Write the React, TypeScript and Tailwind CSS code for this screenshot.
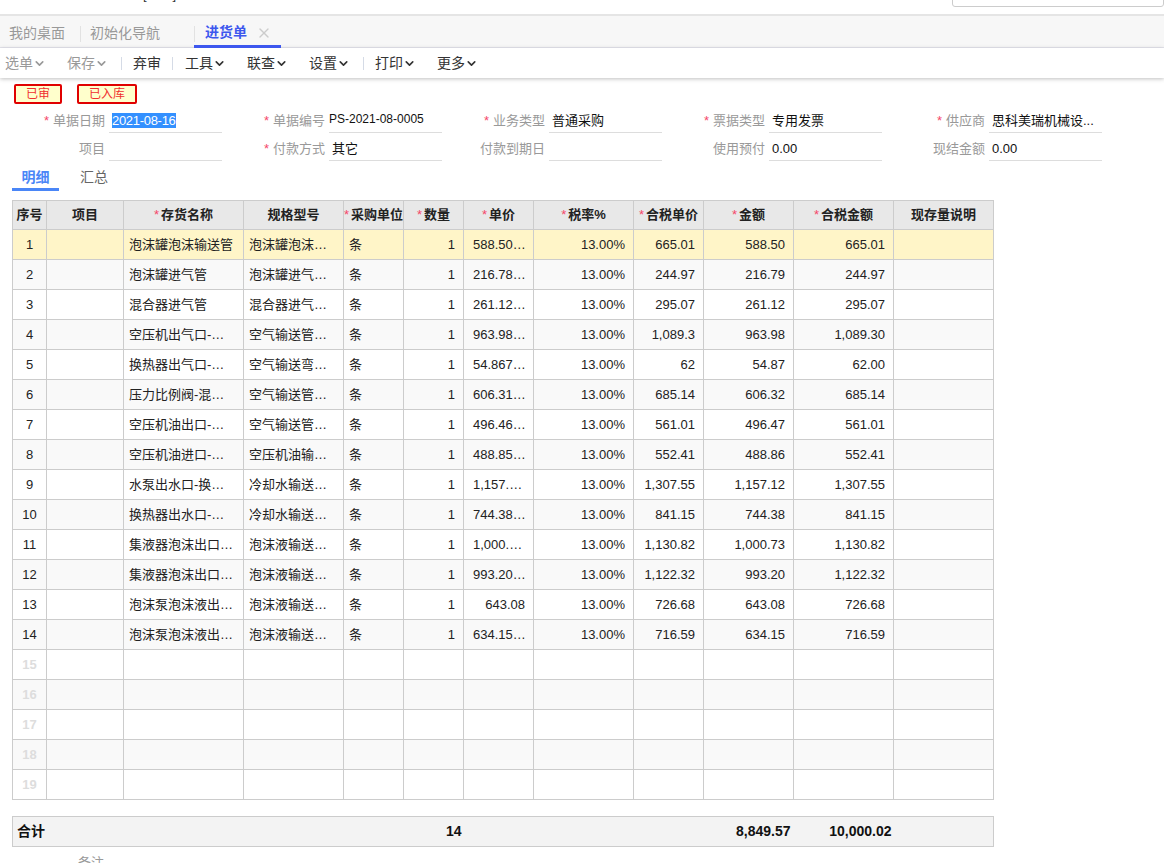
import { FC, ReactNode } from 'react';
import { ChevronDown, X } from 'lucide-react';

const FONT = "font-['Liberation_Sans','Noto_Sans_CJK_SC',sans-serif]";

const COLS = [34, 77, 120, 100, 60, 60, 70, 100, 70, 90, 100, 100];

interface Row {
  name: string;
  spec: string;
  price: string;
  taxPrice: string;
  amount: string;
  total: string;
}

const ROWS: Row[] = [
  { name: '泡沫罐泡沫输送管', spec: '泡沫罐泡沫…', price: '588.50…', taxPrice: '665.01', amount: '588.50', total: '665.01' },
  { name: '泡沫罐进气管', spec: '泡沫罐进气…', price: '216.78…', taxPrice: '244.97', amount: '216.79', total: '244.97' },
  { name: '混合器进气管', spec: '混合器进气…', price: '261.12…', taxPrice: '295.07', amount: '261.12', total: '295.07' },
  { name: '空压机出气口-…', spec: '空气输送管…', price: '963.98…', taxPrice: '1,089.3', amount: '963.98', total: '1,089.30' },
  { name: '换热器出气口-…', spec: '空气输送弯…', price: '54.867…', taxPrice: '62', amount: '54.87', total: '62.00' },
  { name: '压力比例阀-混…', spec: '空气输送管…', price: '606.31…', taxPrice: '685.14', amount: '606.32', total: '685.14' },
  { name: '空压机油出口-…', spec: '空气输送管…', price: '496.46…', taxPrice: '561.01', amount: '496.47', total: '561.01' },
  { name: '空压机油进口-…', spec: '空压机油输…', price: '488.85…', taxPrice: '552.41', amount: '488.86', total: '552.41' },
  { name: '水泵出水口-换…', spec: '冷却水输送…', price: '1,157.…', taxPrice: '1,307.55', amount: '1,157.12', total: '1,307.55' },
  { name: '换热器出水口-…', spec: '冷却水输送…', price: '744.38…', taxPrice: '841.15', amount: '744.38', total: '841.15' },
  { name: '集液器泡沫出口…', spec: '泡沫液输送…', price: '1,000.…', taxPrice: '1,130.82', amount: '1,000.73', total: '1,130.82' },
  { name: '集液器泡沫出口…', spec: '泡沫液输送…', price: '993.20…', taxPrice: '1,122.32', amount: '993.20', total: '1,122.32' },
  { name: '泡沫泵泡沫液出…', spec: '泡沫液输送…', price: '643.08', taxPrice: '726.68', amount: '643.08', total: '726.68' },
  { name: '泡沫泵泡沫液出…', spec: '泡沫液输送…', price: '634.15…', taxPrice: '716.59', amount: '634.15', total: '716.59' }
];

const HEADERS: { label: string; required?: boolean }[] = [
  { label: '序号' },
  { label: '项目' },
  { label: '存货名称', required: true },
  { label: '规格型号' },
  { label: '采购单位', required: true },
  { label: '数量', required: true },
  { label: '单价', required: true },
  { label: '税率%', required: true },
  { label: '合税单价', required: true },
  { label: '金额', required: true },
  { label: '合税金额', required: true },
  { label: '现存量说明' }
];

const Cols: FC = () => (
  <colgroup>
    {COLS.map((w, i) => (
      <col key={i} style={{ width: w }} />
    ))}
  </colgroup>
);

const ToolItem: FC<{ label: string; muted?: boolean; caret?: boolean; className: string }> = ({
  label,
  muted,
  caret = true,
  className
}) => (
  <div className={`flex items-center text-[14px] ${muted ? 'text-[#999]' : 'text-[#333]'} ${className}`}>
    {label}
    {caret && <ChevronDown size={13} strokeWidth={3} className={muted ? 'text-[#999]' : 'text-[#333]'} />}
  </div>
);

const Sep: FC<{ className: string }> = ({ className }) => (
  <div className={`w-px h-[13px] bg-[#d5dbe6] ${className}`} />
);

const Field: FC<{ label: string; required?: boolean; children?: ReactNode }> = ({ label, required, children }) => (
  <div className="flex items-end justify-end h-[28px]">
    <div className="text-[13px] leading-[24px] text-[#999] whitespace-nowrap mr-[4px]">
      {required && <span className="text-[#f5476a] mr-[4px]">*</span>}
      {label}
    </div>
    <div className="w-[113px] h-[24px] border-b border-[#ddd] pl-[3px] text-[13px] leading-[24px] text-[#111] whitespace-nowrap overflow-hidden">
      {children}
    </div>
  </div>
);

const Th: FC<{ label: string; required?: boolean }> = ({ label, required }) => (
  <th className="border border-[#ccc] bg-[#e8e8e8] text-[13px] font-bold text-[#222] text-center whitespace-nowrap p-0 overflow-hidden">
    {required && <span className="text-[#f5476a] font-normal mr-[2px]">*</span>}
    {label}
  </th>
);

const cell = 'border border-[#ccc] text-[13px] text-[#222] whitespace-nowrap overflow-hidden';

const App: FC = () => {
  const blanks = [15, 16, 17, 18, 19];

  return (
    <div className={`${FONT} relative w-[1164px] h-[863px] overflow-hidden bg-white`}>
      {/* Clipped window top */}
      <div className="h-[14px] relative">
        <div className="absolute left-[143px] -top-[13px] w-[33px] flex justify-between text-[13px] leading-[16px] text-[#333]">
          <span>[</span>
          <span>]</span>
        </div>
        <div className="absolute right-0 -top-[10px] w-[212px] h-[17px] border border-[#ccc] rounded-[3px]" />
      </div>

      {/* Page tabs */}
      <div className="h-[34px] flex items-center bg-[#f7f7f7] border-t-2 border-b border-t-[#e5e5e5] border-b-[#e6e6ee] text-[14px] text-[#999]">
        <div className="ml-[9px] w-[71px] mt-[4px]">我的桌面</div>
        <div className="w-px h-[16px] bg-[#e2e2e2] mt-[4px]" />
        <div className="ml-[9px] w-[104px] mt-[4px]">初始化导航</div>
        <div className="relative w-[87px] h-full flex items-center border-b-[3px] border-[#3d57ee] -mb-px">
          <div className="absolute left-0 top-[9px] w-px h-[16px] bg-[#e2e2e2]" />
          <span className="ml-[11px] mt-[4px] font-bold text-[#3d57ee]">进货单</span>
          <X size={16} strokeWidth={2} className="ml-[9px] mt-[4px] text-[#ccc]" />
        </div>
      </div>

      {/* Toolbar */}
      <div className="h-[30px] flex items-center bg-white shadow-[0_1px_4px_rgba(0,0,0,0.25)]">
        <ToolItem label="选单" muted className="ml-[5px]" />
        <ToolItem label="保存" muted className="ml-[21px]" />
        <Sep className="ml-[13px]" />
        <ToolItem label="弃审" caret={false} className="ml-[11px]" />
        <Sep className="ml-[11px]" />
        <ToolItem label="工具" className="ml-[12px]" />
        <ToolItem label="联查" className="ml-[21px]" />
        <ToolItem label="设置" className="ml-[21px]" />
        <Sep className="ml-[13px]" />
        <ToolItem label="打印" className="ml-[11px]" />
        <ToolItem label="更多" className="ml-[21px]" />
      </div>

      {/* Status stamps */}
      <div className="flex mt-[6px] ml-[14px] gap-[15px]">
        <div className="w-[48px] h-[20px] border-2 border-[#e00000] rounded-[2px] bg-[#ffffcc] text-[12px] leading-[16px] text-center text-[#f03030]">
          已审
        </div>
        <div className="w-[60px] h-[20px] border-2 border-[#e00000] rounded-[2px] bg-[#ffffcc] text-[12px] leading-[16px] text-center text-[#f03030]">
          已入库
        </div>
      </div>

      {/* Form */}
      <div className="grid grid-cols-[222px_220px_220px_220px_220px] mt-[1px]">
        <Field label="单据日期" required>
          <span className="bg-[#3390ff] text-white inline-block leading-[15px] tracking-[-0.3px]">2021-08-16</span>
        </Field>
        <Field label="单据编号" required>
          <span className="text-[12px] -ml-[3px] relative -top-[2px]">PS-2021-08-0005</span>
        </Field>
        <Field label="业务类型" required>普通采购</Field>
        <Field label="票据类型" required>专用发票</Field>
        <Field label="供应商" required>思科美瑞机械设...</Field>
        <Field label="项目" />
        <Field label="付款方式" required>其它</Field>
        <Field label="付款到期日" />
        <Field label="使用预付">0.00</Field>
        <Field label="现结金额">0.00</Field>
      </div>

      {/* Detail tabs */}
      <div className="flex ml-[12px] mt-[5px] h-[25px] text-[14px] leading-[22px]">
        <div className="w-[47px] text-center font-bold text-[#4a86f7] border-b-[3px] border-[#4a86f7]">明细</div>
        <div className="ml-[21px] text-[#666]">汇总</div>
      </div>

      {/* Detail table */}
      <table className="table-fixed border-collapse ml-[12px] mt-[9px] w-[981px]">
        <Cols />
        <thead>
          <tr className="h-[29px]">
            {HEADERS.map((h) => (
              <Th key={h.label} label={h.label} required={h.required} />
            ))}
          </tr>
        </thead>
        <tbody>
          {ROWS.map((r, i) => (
            <tr
              key={i}
              className={`h-[30px] ${i === 0 ? 'bg-[#fff5c8]' : i % 2 === 1 ? 'bg-[#f9f9f9]' : 'bg-white'}`}
            >
              <td className={`${cell} text-center`}>{i + 1}</td>
              <td className={cell} />
              <td className={`${cell} pl-[5px]`}>{r.name}</td>
              <td className={`${cell} pl-[5px]`}>{r.spec}</td>
              <td className={`${cell} pl-[5px]`}>条</td>
              <td className={`${cell} text-right pr-[8px]`}>1</td>
              <td className={`${cell} pl-[9px] pr-[8px] ${r.price === '643.08' ? 'text-right' : ''}`}>{r.price}</td>
              <td className={`${cell} text-right pr-[8px]`}>13.00%</td>
              <td className={`${cell} text-right pr-[8px]`}>{r.taxPrice}</td>
              <td className={`${cell} text-right pr-[8px]`}>{r.amount}</td>
              <td className={`${cell} text-right pr-[8px]`}>{r.total}</td>
              <td className={cell} />
            </tr>
          ))}
          {blanks.map((n) => (
            <tr key={n} className={`h-[30px] ${n % 2 === 0 ? 'bg-[#f9f9f9]' : 'bg-white'}`}>
              <td className={`${cell} text-center font-bold !text-[#ddd]`}>{n}</td>
              {COLS.slice(1).map((_, j) => (
                <td key={j} className={cell} />
              ))}
            </tr>
          ))}
        </tbody>
      </table>

      {/* Totals */}
      <table className="table-fixed border-collapse ml-[12px] mt-[16px] w-[981px]">
        <Cols />
        <tbody>
          <tr className="h-[30px] bg-[#f3f3f3] border border-[#ccc] text-[14px] font-bold text-[#111]">
            <td colSpan={5} className="pl-[4px]">合计</td>
            <td className="text-right pr-[2px]">14</td>
            <td colSpan={3} />
            <td className="text-right pr-[3px]">8,849.57</td>
            <td className="text-right pr-[2px]">10,000.02</td>
            <td />
          </tr>
        </tbody>
      </table>

      <div className="ml-[78px] mt-[6px] text-[13px] text-[#999]">备注</div>
    </div>
  );
};

export default App;
